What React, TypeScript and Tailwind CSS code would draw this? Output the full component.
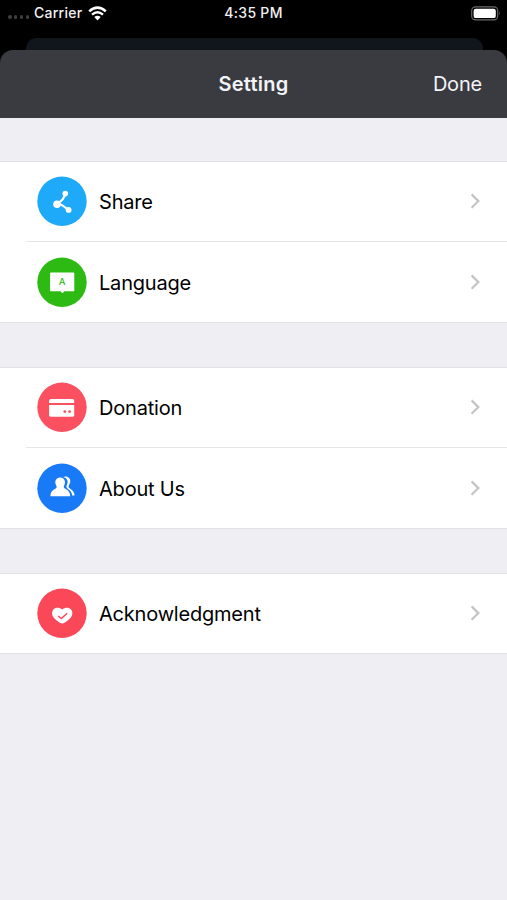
/**
 * Settings sheet: grouped rows with a round icon, shown over the dimmed parent screen.
 */
import type { ReactNode } from 'react';

type Row = { label: string; icon: ReactNode };

function ShareIcon() {
  return (
    <svg width="50" height="50" viewBox="0 -0.3 50 50" fill="none" aria-hidden="true">
      <circle cx="25" cy="25" r="24.7" fill="#1FA9F9" />
      <path d="M28.3 17.2Q26.8 24 20.5 27Q25.5 28.4 31.5 34" stroke="#fff" strokeWidth="2.2" />
      <circle cx="28.3" cy="17.3" r="2.8" fill="#fff" />
      <circle cx="20" cy="28" r="3.8" fill="#fff" />
      <circle cx="31.6" cy="33.6" r="2.9" fill="#fff" />
    </svg>
  );
}

function LanguageIcon() {
  return (
    <svg width="50" height="50" viewBox="0 -0.3 50 50" aria-hidden="true">
      <circle cx="25" cy="25" r="24.7" fill="#2DBB13" />
      <path d="M14 15.3H36.4Q37.3 15.3 37.3 16.2V33.1Q37.3 34 36.4 34H27.3L25.4 36L23.5 34H14Q13.1 34 13.1 33.1V16.2Q13.1 15.3 14 15.3Z" fill="#fff" />
      <text x="25.1" y="27.9" textAnchor="middle" fill="#2DBB13" className="font-['Inter',sans-serif] text-[9.5px] font-medium">A</text>
    </svg>
  );
}

function CardIcon() {
  return (
    <svg width="50" height="50" viewBox="0 -0.3 50 50" aria-hidden="true">
      <circle cx="25" cy="25" r="24.7" fill="#FB505F" />
      <path d="M12.1 20.8V18.6Q12.1 16.7 14 16.7H35.3Q37.2 16.7 37.2 18.6V20.8Z" fill="#fff" />
      <path d="M12.1 22.8H37.2V33Q37.2 34.4 35.8 34.4H13.5Q12.1 34.4 12.1 33Z" fill="#fff" />
      <circle cx="27.8" cy="29.3" r="1.4" fill="#FB505F" />
      <circle cx="32.6" cy="29.3" r="1.4" fill="#FB505F" />
    </svg>
  );
}

function PeopleIcon() {
  return (
    <svg width="50" height="50" viewBox="0 -0.3 50 50" fill="#fff" aria-hidden="true">
      <circle cx="25" cy="25" r="24.7" fill="#197AF8" />
      <path d="M26 13.7C29.8 12 34 14.4 33.2 19C32.8 21 31.4 22.2 31.6 23.6C31.9 25.6 37.3 26 37.6 32.3H35.2C34.7 26.4 29.4 26.3 29.4 23.3C29.4 21.8 30.8 20.6 30.6 18.2C30.4 15.4 28.2 14 26 13.7Z" />
      <path d="M23.2 14.3C26.2 14.3 28 16.6 28 19.2C28 21.2 26.8 22.2 26.8 23.8C26.8 26.4 33 25.6 33.2 33H13.4C13.6 25.6 19.7 26.4 19.7 23.8C19.7 22.2 18.3 21.2 18.3 19.2C18.3 16.6 20.2 14.3 23.2 14.3Z" />
    </svg>
  );
}

function HeartIcon() {
  return (
    <svg width="50" height="50" viewBox="0 -0.3 50 50" fill="none" aria-hidden="true">
      <circle cx="25" cy="25" r="24.7" fill="#FA4858" />
      <path d="M25.2 21.2C28.2 18.7 32.3 19.2 34.1 21.3C36 23.7 35.7 26.9 33.8 29.2C32 31.4 29.4 33.2 27.5 34.5C26 35.5 24.4 35.5 22.9 34.5C21 33.2 18.4 31.4 16.6 29.2C14.7 26.9 14.4 23.7 16.3 21.3C18.1 19.2 22.2 18.7 25.2 21.2Z" fill="#fff" />
      <path d="M21.2 27.7L24.3 30.3L30.2 24.9" stroke="#FA4858" strokeWidth="1.5" />
    </svg>
  );
}

const sections: Row[][] = [
  [
    { label: 'Share', icon: <ShareIcon /> },
    { label: 'Language', icon: <LanguageIcon /> },
  ],
  [
    { label: 'Donation', icon: <CardIcon /> },
    { label: 'About Us', icon: <PeopleIcon /> },
  ],
  [{ label: 'Acknowledgment', icon: <HeartIcon /> }],
];

function StatusBar() {
  return (
    <div className="grid h-[38px] grid-cols-3 items-start pt-1 text-[14px] leading-[18px] font-medium text-[#f2f2f2]">
      <div className="flex items-center pl-2">
        <span className="mt-2 flex w-[26px] gap-[2.4px]">
          {[0, 1, 2, 3].map((i) => (
            <span key={i} className="size-[3.5px] rounded-full bg-[#3f3f3f]" />
          ))}
        </span>
        <span className="tracking-[0.25px]">Carrier</span>
        <svg className="ml-1.5" width="19" height="15" viewBox="0 0 19 15" fill="none" stroke="#fff" aria-hidden="true">
          <path d="M1.2 5.4Q9.5 -2.2 17.8 5.4" strokeWidth="2.6" />
          <path d="M4 8.7Q9.5 3.8 15 8.7" strokeWidth="2.3" />
          <path d="M6.3 11.1Q9.5 8.3 12.7 11.1L9.5 14.4Z" fill="#fff" stroke="none" />
        </svg>
      </div>
      <div className="text-center tracking-[0.3px]">4:35 PM</div>
      <div className="flex justify-end pt-[1.5px] pr-1.5">
        <svg width="30" height="15" viewBox="0 0 30 15" aria-hidden="true">
          <rect x="0.7" y="0.9" width="26" height="13" rx="3.8" fill="none" stroke="#6b6b6b" strokeWidth="1.1" />
          <rect x="2.6" y="2.7" width="22.2" height="9.4" rx="2.2" fill="#fff" />
          <path d="M28.2 5.2Q30 7.4 28.2 9.6Z" fill="#6b6b6b" />
        </svg>
      </div>
    </div>
  );
}

function SettingRow({ row, divided }: { row: Row; divided: boolean }) {
  return (
    <li className="pl-[26px]">
      <div className={`flex items-center pl-[11px] pr-[26px] ${divided ? 'h-[81px] border-t border-[#e6e6e8]' : 'h-[79px] pb-px'}`}>
        {row.icon}
        <span className="ml-3 flex-1 pt-px text-[20px] leading-6 tracking-[-0.2px] text-black">{row.label}</span>
        <svg width="11" height="17" viewBox="0 0 11 17" fill="none" aria-hidden="true">
          <path d="M1.6 1.4L8.4 8.1L1.6 14.8" stroke="#c4c4c6" strokeWidth="2.2" />
        </svg>
      </div>
    </li>
  );
}

export default function App() {
  return (
    <div className="flex h-[900px] w-full flex-col overflow-hidden bg-black font-['Inter',sans-serif]">
      <StatusBar />
      <div className="ml-[26px] mr-6 h-3 shrink-0 rounded-t-[10px] bg-[#10161c]" />
      <main className="flex flex-1 flex-col overflow-hidden rounded-t-[13px] bg-[#3a3b41]">
        <header className="grid h-[68px] shrink-0 grid-cols-3 items-center px-[25px] text-[20px] text-[#f3f4f8]">
          <h1 className="col-start-2 text-center font-semibold tracking-[0.25px]">Setting</h1>
          <button type="button" className="justify-self-end tracking-[-0.2px]">Done</button>
        </header>
        <div className="flex flex-1 flex-col gap-11 bg-[#efeef3] pt-[43px]">
          {sections.map((rows) => (
            <ul key={rows[0].label} className="border-y border-[#e2e2e5] bg-white">
              {rows.map((row, i) => (
                <SettingRow key={row.label} row={row} divided={i > 0} />
              ))}
            </ul>
          ))}
        </div>
      </main>
    </div>
  );
}
